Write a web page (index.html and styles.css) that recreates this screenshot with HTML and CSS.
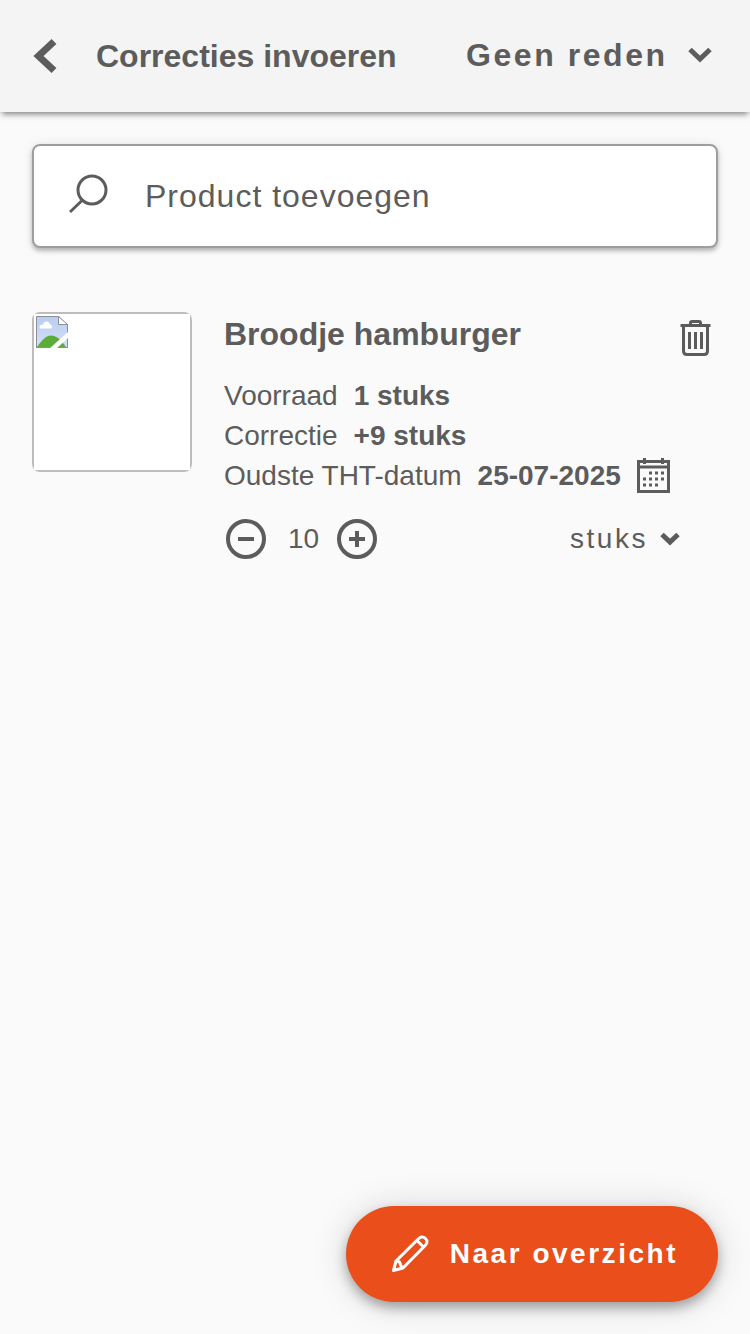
FILE: index.html
```
<!DOCTYPE html>
<html lang="nl">
<head>
<meta charset="utf-8">
<meta name="viewport" content="width=device-width, initial-scale=1">
<title>Correcties invoeren</title>
<link rel="stylesheet" href="styles.css">
</head>
<body>
<header class="topbar">
  <button class="icon-button back" type="button" aria-label="Terug">
    <svg width="26" height="36" viewBox="0 0 26 36"><path d="M22 3.500L6.500 18L22 32.500" fill="none" stroke="currentColor" stroke-width="7"/></svg>
  </button>
  <h1 class="title">Correcties invoeren</h1>
  <div class="picker reason">
    <select class="picker-select" aria-label="Reden"><option>Geen reden</option></select>
    <svg class="picker-arrow" width="24" height="16" viewBox="0 0 24 16"><path d="M2 2.500L12 12L22 2.500" fill="none" stroke="currentColor" stroke-width="5"/></svg>
  </div>
</header>

<main class="content">
  <label class="search">
    <svg width="40" height="44" viewBox="0 0 40 44" fill="none" stroke="currentColor" stroke-width="3"><circle cx="23" cy="16" r="14"/><path d="M13.500 26L1 38"/></svg>
    <input class="search-input" type="text" placeholder="Product toevoegen" aria-label="Product toevoegen">
  </label>

  <article class="product">
    <div class="thumb" role="img" aria-label="Broodje hamburger">
      <div class="thumb-frame">
        <svg width="32" height="32" viewBox="0 0 32 32">
          <defs><linearGradient id="sky" x1="0" y1="0" x2="0" y2="1"><stop offset="0" stop-color="#b9cdf2"/><stop offset="1" stop-color="#d3e0f8"/></linearGradient></defs>
          <path d="M0 0H23L32 9V32H0Z" fill="url(#sky)"/>
          <path d="M4 12.500C2.500 9 6 8 7 9C8 4.500 13 4.500 14 8.500C16.500 9 16.500 11 15.500 12.500Z" fill="#fff"/>
          <path d="M1 31C6 24 10 19.500 15 19.500C21 19.500 26 25 30 31Z" fill="#5aae38"/>
          <path d="M.5 31.500V.500H22.500M0 31.500H32M31.500 31V8" fill="none" stroke="#8c8f96"/>
          <path d="M22.500 .500V8.500H31.500Z" fill="#fff" stroke="#8c8f96"/>
          <path d="M13 33L33 15V21L20 33Z" fill="#fff"/>
        </svg>
      </div>
    </div>
    <div class="details">
      <h2 class="name">Broodje hamburger</h2>
      <dl class="facts">
        <div class="fact"><dt>Voorraad</dt><dd>1 stuks</dd></div>
        <div class="fact"><dt>Correctie</dt><dd>+9 stuks</dd></div>
        <div class="fact"><dt>Oudste THT-datum</dt><dd>25-07-2025</dd>
          <dd class="calendar"><button class="icon-button" type="button" aria-label="Datum kiezen">
            <svg width="34" height="36" viewBox="0 0 34 36">
              <path d="M1.500 3.500H31.500V33.500H1.500Z" fill="none" stroke="currentColor" stroke-width="3"/>
              <path d="M1 9H32M7.500 0V6M25.500 0V6" fill="none" stroke="currentColor" stroke-width="3"/>
              <path d="M12 15H27M6 21H27M6 27H21" fill="none" stroke="currentColor" stroke-width="3" stroke-dasharray="3 3"/>
            </svg>
          </button></dd>
        </div>
      </dl>
      <div class="controls">
        <div class="stepper">
          <button class="icon-button" type="button" aria-label="Minder">
            <svg width="44" height="42" viewBox="0 0 44 42" fill="none" stroke="currentColor" stroke-width="4"><circle cx="22" cy="21" r="18"/><path d="M14 21H30"/></svg>
          </button>
          <output class="amount">10</output>
          <button class="icon-button" type="button" aria-label="Meer">
            <svg width="44" height="42" viewBox="0 0 44 42" fill="none" stroke="currentColor" stroke-width="4"><circle cx="22" cy="21" r="18"/><path d="M14 21H30M22 13V29"/></svg>
          </button>
        </div>
        <div class="picker unit">
          <select class="picker-select" aria-label="Eenheid"><option>stuks</option></select>
          <svg class="picker-arrow" width="20" height="14" viewBox="0 0 20 14"><path d="M2 2.500L10 10L18 2.500" fill="none" stroke="currentColor" stroke-width="5"/></svg>
        </div>
      </div>
    </div>
    <button class="icon-button delete" type="button" aria-label="Verwijderen">
      <svg width="31" height="36" viewBox="0 0 31 36" fill="none" stroke="currentColor" stroke-width="3">
        <path d="M0.500 5.500H30.500M10.500 5.500V3Q10.500 1.500 12 1.500H19Q20.500 1.500 20.500 3V5.500"/>
        <path d="M3.500 6V31Q3.500 34.500 7 34.500H24Q27.500 34.500 27.500 31V6M9.500 12V29M15.500 12V29M21.500 12V29"/>
      </svg>
    </button>
  </article>
</main>

<footer class="actions">
  <button class="primary" type="button">
    <svg width="38" height="38" viewBox="0 0 38 38" fill="none" stroke="currentColor" stroke-width="3" stroke-linejoin="round">
      <path d="M1.500 35.500L4 26L26.500 3.800C28.700 1.500 31.500 1.500 33.500 3.500C35.500 5.500 35.500 8.300 33.200 10.500L11 33Z"/>
      <path d="M25 5.500L31.500 12M4 26L7.500 27L9 31L11 33"/>
      <path d="M.5 36.500L2 31L6.500 35.300Z" fill="currentColor" stroke="none"/>
    </svg>
    <span>Naar overzicht</span>
  </button>
</footer>
</body>
</html>
```
FILE: styles.css
```
* {
  box-sizing: border-box;
}

body {
  margin: 0;
  min-height: 100vh;
  display: flex;
  flex-direction: column;
  background: #fafafa;
  color: #5c5c5c;
  font-family: "Liberation Sans", Arial, sans-serif;
  font-size: 28px;
  line-height: 40px;
}

svg {
  display: block;
  flex: none;
}

button,
input,
select {
  font: inherit;
  color: inherit;
  letter-spacing: inherit;
}

.icon-button {
  display: block;
  padding: 0;
  border: 0;
  background: none;
  cursor: pointer;
}

.topbar {
  display: flex;
  align-items: center;
  min-height: 112px;
  padding: 0 38px 0 32px;
  background: #f4f4f4;
  box-shadow: 0 4px 6px -2px #00000080;
}

.back {
  width: 64px;
}

.title {
  margin: 0;
  flex: 1;
  font-size: 32px;
}

.picker {
  display: grid;
  align-items: center;
}

.picker-select,
.picker-arrow {
  grid-area: 1 / 1;
}

.picker-select {
  appearance: none;
  margin: 0;
  padding: 0;
  border: 0;
  background: none;
}

.picker-arrow {
  justify-self: end;
  pointer-events: none;
}

.reason {
  padding-bottom: 2px;
  font-size: 32px;
  font-weight: bold;
  letter-spacing: 0.08em;
}

.reason .picker-select {
  padding-right: 44px;
}

.unit {
  letter-spacing: 0.09em;
}

.unit .picker-select {
  padding-right: 32px;
}

.content {
  flex: 1;
  padding: 32px;
}

.search {
  display: flex;
  align-items: center;
  gap: 36px;
  min-height: 104px;
  padding: 0 35px;
  border: 2px solid #9e9e9e;
  border-radius: 8px;
  background: #fff;
  box-shadow: 0 3px 4px #00000040, 0 0 12px #00000014;
}

.search-input {
  flex: 1;
  min-width: 0;
  padding: 0;
  border: 0;
  outline: 0;
  background: none;
  font-size: 32px;
  letter-spacing: 1px;
}

.search-input::placeholder {
  color: inherit;
  opacity: 1;
}

.product {
  display: grid;
  grid-template-columns: 160px 1fr 38px;
  align-items: start;
  margin-top: 64px;
}

.thumb {
  border-radius: 8px;
  overflow: hidden;
  background: #fff;
}

.thumb-frame {
  height: 160px;
  padding: 2px;
  border: 2px solid #bdbdbd;
}

.details {
  padding-left: 32px;
}

.name {
  margin: 0 0 20px;
  font-size: 32px;
  line-height: 44px;
}

.facts {
  margin: 0 0 22px;
}

.fact {
  display: flex;
  align-items: center;
  gap: 16px;
  height: 40px;
}

.fact dd {
  margin: 0;
  font-weight: bold;
}

.controls,
.stepper {
  display: flex;
  align-items: center;
}

.controls {
  justify-content: space-between;
}

.stepper {
  gap: 16px;
}

.amount {
  padding-left: 4px;
}

.delete {
  padding-top: 8px;
}

.actions {
  position: sticky;
  bottom: 0;
  display: flex;
  justify-content: flex-end;
  padding: 32px;
}

.primary {
  display: flex;
  align-items: center;
  gap: 20px;
  height: 96px;
  padding: 0 40px 0 46px;
  border: 0;
  border-radius: 48px;
  background: #e94e1b;
  color: #fff;
  font-weight: bold;
  letter-spacing: 0.09em;
  box-shadow: 0 6px 12px #0000004d, 0 2px 36px #00000026;
  cursor: pointer;
}
```
